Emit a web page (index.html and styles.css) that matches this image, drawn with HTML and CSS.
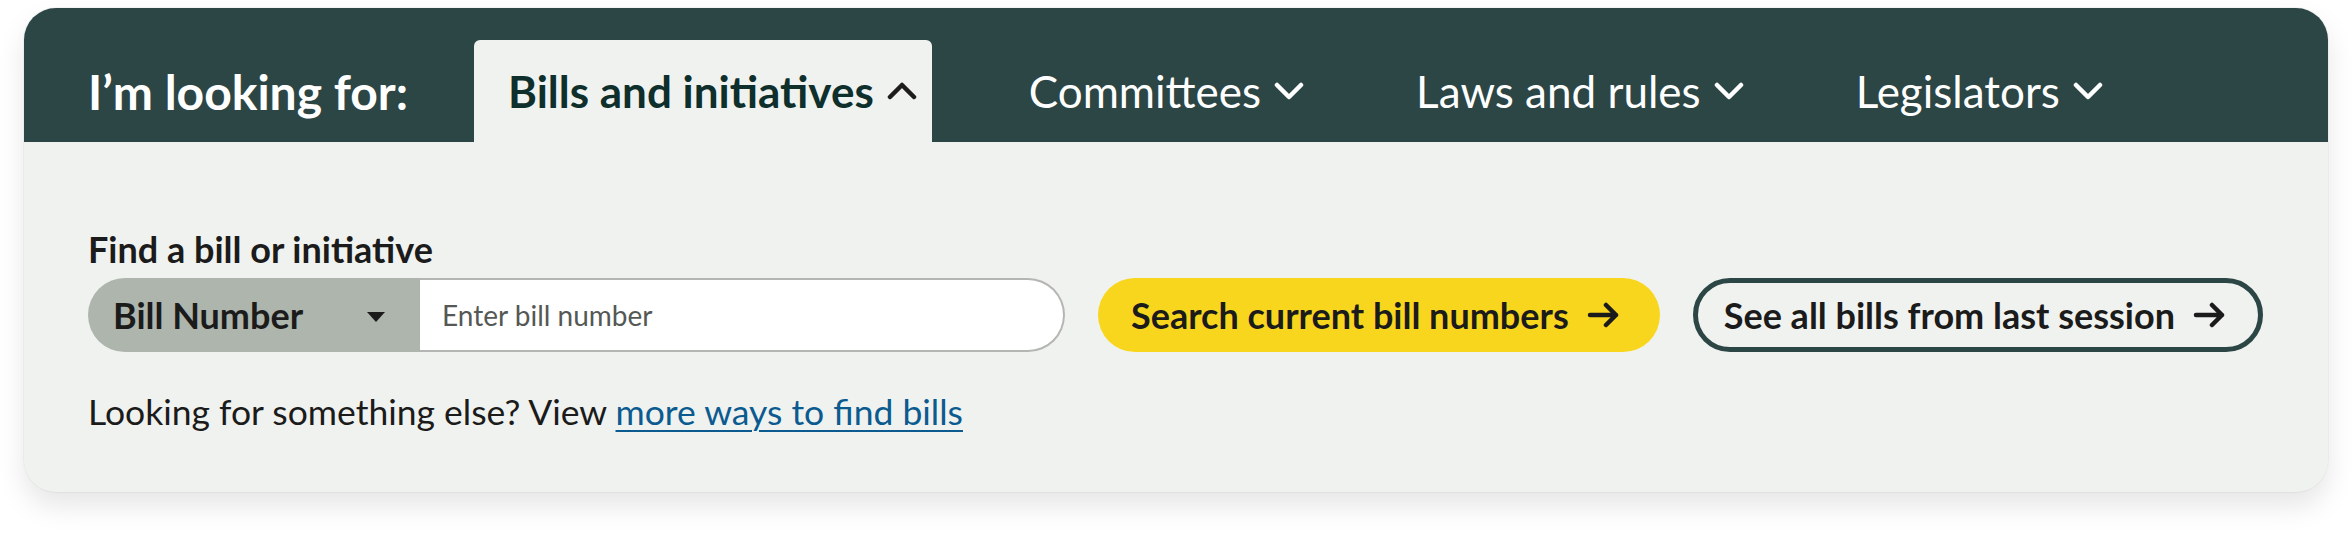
FILE: index.html
```html
<!DOCTYPE html>
<html lang="en">
<head>
<meta charset="utf-8">
<title>Bill finder</title>
<link rel="stylesheet" href="styles.css">
</head>
<body>
<div class="page">
  <section class="finder">
    <nav class="finder-tabs">
      <span class="finder-label">I’m looking for:</span>
      <button class="tab tab-active" type="button">Bills and initiatives
        <svg class="chev" viewBox="0 0 30 18" aria-hidden="true"><path d="M3 15 L15 3 L27 15"/></svg>
      </button>
      <button class="tab" type="button">Committees
        <svg class="chev" viewBox="0 0 30 18" aria-hidden="true"><path d="M3 3 L15 15 L27 3"/></svg>
      </button>
      <button class="tab" type="button">Laws and rules
        <svg class="chev" viewBox="0 0 30 18" aria-hidden="true"><path d="M3 3 L15 15 L27 3"/></svg>
      </button>
      <button class="tab" type="button">Legislators
        <svg class="chev" viewBox="0 0 30 18" aria-hidden="true"><path d="M3 3 L15 15 L27 3"/></svg>
      </button>
    </nav>
    <div class="finder-panel">
      <label class="field-label" for="bill">Find a bill or initiative</label>
      <div class="search-row">
        <div class="combo">
          <div class="combo-select">
            <span>Bill Number</span>
            <svg class="tri" viewBox="0 0 18 10" aria-hidden="true"><path d="M0 0 H18 L9 10 Z"/></svg>
          </div>
          <input class="combo-input" id="bill" type="text" placeholder="Enter bill number">
        </div>
        <a class="btn btn-primary" href="#">Search current bill numbers
          <svg class="arrow" viewBox="0 0 34 26" aria-hidden="true"><path d="M3 13 H29 M19 3 L29 13 L19 23"/></svg>
        </a>
        <a class="btn btn-outline" href="#">See all bills from last session
          <svg class="arrow" viewBox="0 0 34 26" aria-hidden="true"><path d="M3 13 H29 M19 3 L29 13 L19 23"/></svg>
        </a>
      </div>
      <p class="more">Looking for something else? View <a href="#">more ways to find bills</a></p>
    </div>
  </section>
</div>
</body>
</html>
```
FILE: styles.css
```css
* { box-sizing: border-box; }

html, body {
  margin: 0;
  padding: 0;
  background: #ffffff;
  font-family: Lato, "Open Sans", "Liberation Sans", sans-serif;
  color: #1b1b1b;
}

.page {
  padding: 8px 24px 40px;
}

.finder {
  border-radius: 32px;
  overflow: hidden;
  background: #f0f2ef;
  box-shadow: 0 14px 28px rgba(0, 0, 0, 0.1), 0 0 0 1px rgba(0, 0, 0, 0.035);
}

.finder-tabs {
  display: flex;
  align-items: flex-end;
  gap: 63px;
  height: 134px;
  padding-left: 64px;
  background: #2c4646;
}

.finder-label {
  display: flex;
  align-items: center;
  height: 102px;
  font-size: 48px;
  font-weight: 700;
  color: #ffffff;
  margin-right: 3px;
}

.tab {
  display: flex;
  align-items: center;
  gap: 13px;
  height: 102px;
  padding: 0 15px 0 34px;
  border: 0;
  border-radius: 6px 6px 0 0;
  background: transparent;
  font-family: inherit;
  font-size: 44px;
  font-weight: 400;
  color: #ffffff;
  cursor: pointer;
}

.tab-active {
  background: #f0f2ef;
  color: #0e2f2c;
  font-weight: 700;
}

.chev {
  width: 30px;
  height: 18px;
  fill: none;
  stroke: #ffffff;
  stroke-width: 4.5;
  stroke-linecap: round;
  stroke-linejoin: round;
}

.tab-active .chev {
  stroke: #1d1d1b;
}

.finder-panel {
  padding: 86px 64px 59px;
}

.field-label {
  display: block;
  font-size: 36px;
  font-weight: 700;
  line-height: 43px;
  color: #1b1b1b;
}

.search-row {
  display: flex;
  align-items: center;
  gap: 33px;
  margin-top: 7px;
}

.combo {
  display: flex;
  height: 74px;
}

.combo-select {
  display: flex;
  align-items: center;
  justify-content: space-between;
  width: 332px;
  padding: 0 35px 0 25px;
  background: #adb5ad;
  border-radius: 37px 0 0 37px;
  font-size: 36px;
  font-weight: 700;
  color: #1b1b1b;
}

.tri {
  width: 18px;
  height: 10px;
  margin-top: 4px;
  fill: #1b1b1b;
}

.combo-input {
  width: 645px;
  height: 74px;
  padding: 0 22px;
  border: 2px solid #b4b6b3;
  border-left: 0;
  border-radius: 0 37px 37px 0;
  background: #ffffff;
  font-family: inherit;
  font-size: 28px;
  color: #1b1b1b;
  outline: none;
}

.combo-input::placeholder {
  color: #555855;
}

.btn {
  display: inline-flex;
  align-items: center;
  gap: 18px;
  height: 74px;
  border-radius: 37px;
  font-size: 36px;
  font-weight: 700;
  color: #1b1b1b;
  text-decoration: none;
  white-space: nowrap;
}

.btn-primary {
  padding: 0 39px 0 33px;
  background: #f9d61e;
}

.btn-outline {
  padding: 0 31px 0 26px;
  border: 5px solid #2c4646;
  background: transparent;
}

.arrow {
  width: 34px;
  height: 26px;
  fill: none;
  stroke: #1b1b1b;
  stroke-width: 4.5;
  stroke-linecap: round;
  stroke-linejoin: round;
}

.more {
  margin: 38px 0 0;
  font-size: 35.5px;
  line-height: 43px;
  color: #1b1b1b;
}

.more a {
  color: #0b5b90;
  text-decoration: underline;
  text-decoration-thickness: 2px;
  text-underline-offset: 5px;
}
```
